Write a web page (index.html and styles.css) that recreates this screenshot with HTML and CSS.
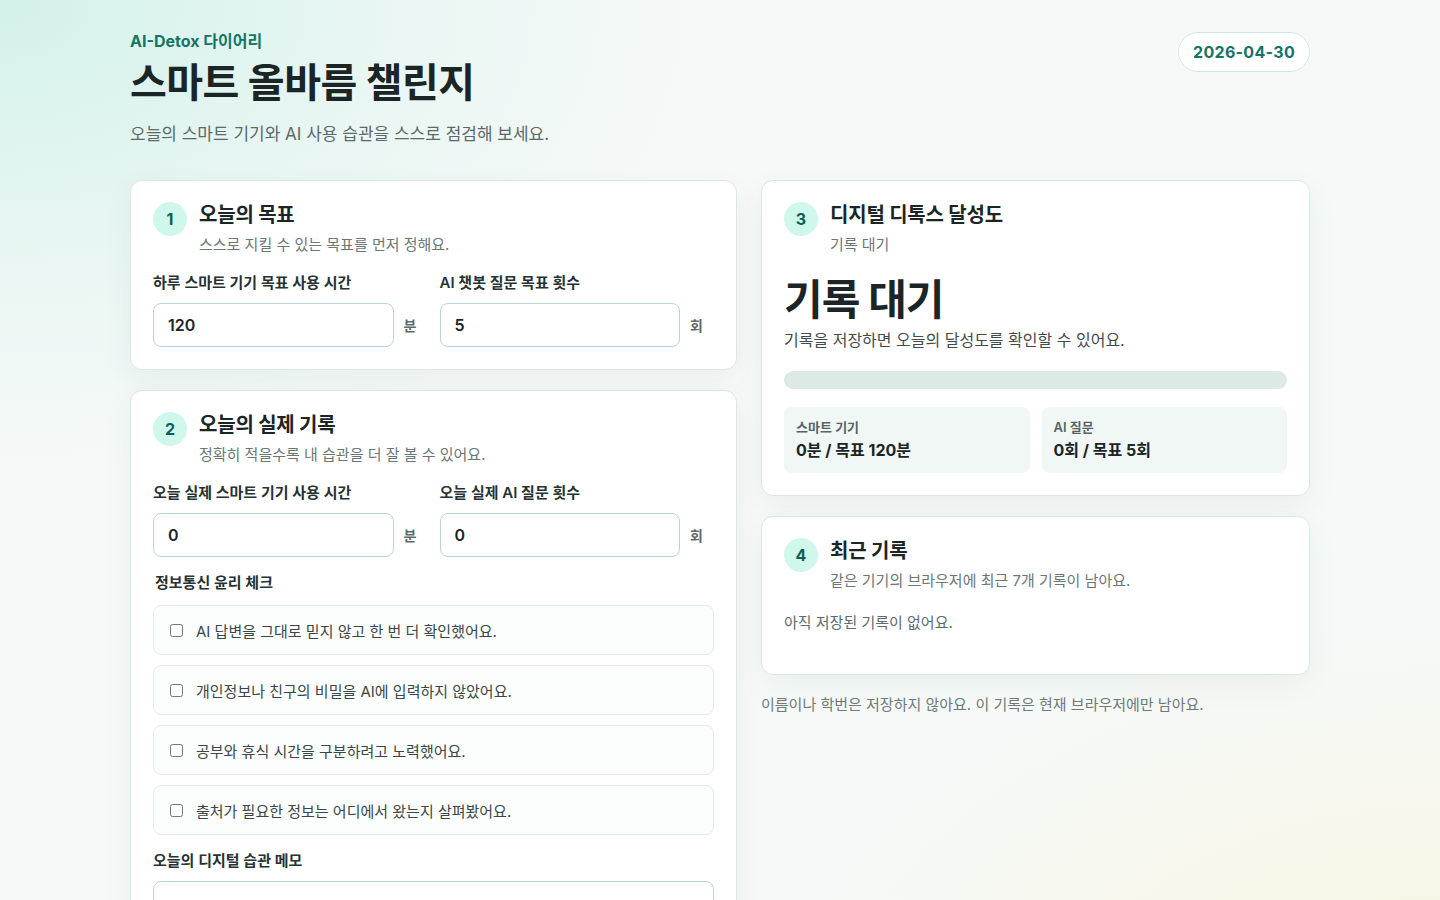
FILE: index.html
```html
<!DOCTYPE html>
<html lang="ko">
<head>
<meta charset="utf-8">
<title>AI-Detox 다이어리</title>
<link rel="stylesheet" href="styles.css">
</head>
<body>
<main class="page">
  <header class="top">
    <div>
      <p class="eyebrow">AI-Detox 다이어리</p>
      <h1 class="title">스마트 올바름 챌린지</h1>
      <p class="lead">오늘의 스마트 기기와 AI 사용 습관을 스스로 점검해 보세요.</p>
    </div>
    <div class="date-pill">2026-04-30</div>
  </header>

  <div class="layout">
    <div class="col">
      <section class="card">
        <div class="card-head">
          <span class="badge">1</span>
          <div>
            <h2 class="card-title">오늘의 목표</h2>
            <p class="card-sub">스스로 지킬 수 있는 목표를 먼저 정해요.</p>
          </div>
        </div>
        <div class="fields">
          <label class="field">
            <span class="field-label">하루 스마트 기기 목표 사용 시간</span>
            <span class="field-row"><input class="input" type="text" size="4" value="120"><span class="unit">분</span></span>
          </label>
          <label class="field">
            <span class="field-label">AI 챗봇 질문 목표 횟수</span>
            <span class="field-row"><input class="input" type="text" size="4" value="5"><span class="unit">회</span></span>
          </label>
        </div>
      </section>

      <section class="card">
        <div class="card-head">
          <span class="badge">2</span>
          <div>
            <h2 class="card-title">오늘의 실제 기록</h2>
            <p class="card-sub">정확히 적을수록 내 습관을 더 잘 볼 수 있어요.</p>
          </div>
        </div>
        <div class="fields">
          <label class="field">
            <span class="field-label">오늘 실제 스마트 기기 사용 시간</span>
            <span class="field-row"><input class="input" type="text" size="4" value="0"><span class="unit">분</span></span>
          </label>
          <label class="field">
            <span class="field-label">오늘 실제 AI 질문 횟수</span>
            <span class="field-row"><input class="input" type="text" size="4" value="0"><span class="unit">회</span></span>
          </label>
        </div>
        <p class="group-label">정보통신 윤리 체크</p>
        <div class="checks">
          <label class="check"><input type="checkbox"><span>AI 답변을 그대로 믿지 않고 한 번 더 확인했어요.</span></label>
          <label class="check"><input type="checkbox"><span>개인정보나 친구의 비밀을 AI에 입력하지 않았어요.</span></label>
          <label class="check"><input type="checkbox"><span>공부와 휴식 시간을 구분하려고 노력했어요.</span></label>
          <label class="check"><input type="checkbox"><span>출처가 필요한 정보는 어디에서 왔는지 살펴봤어요.</span></label>
        </div>
        <p class="memo-label">오늘의 디지털 습관 메모</p>
        <textarea class="memo" rows="3" placeholder="예: 숙제할 때 알림을 끄고, 궁금한 점은 먼저 스스로 생각해 봤어요."></textarea>
      </section>
    </div>

    <div class="col">
      <section class="card">
        <div class="card-head">
          <span class="badge">3</span>
          <div>
            <h2 class="card-title">디지털 디톡스 달성도</h2>
            <p class="card-sub">기록 대기</p>
          </div>
        </div>
        <p class="score">기록 대기</p>
        <p class="score-desc">기록을 저장하면 오늘의 달성도를 확인할 수 있어요.</p>
        <div class="progress"><div class="progress-fill"></div></div>
        <div class="stats">
          <div class="stat">
            <p class="stat-label">스마트 기기</p>
            <p class="stat-value">0분 / 목표 120분</p>
          </div>
          <div class="stat">
            <p class="stat-label">AI 질문</p>
            <p class="stat-value">0회 / 목표 5회</p>
          </div>
        </div>
      </section>

      <section class="card">
        <div class="card-head">
          <span class="badge">4</span>
          <div>
            <h2 class="card-title">최근 기록</h2>
            <p class="card-sub">같은 기기의 브라우저에 최근 7개 기록이 남아요.</p>
          </div>
        </div>
        <p class="empty">아직 저장된 기록이 없어요.</p>
      </section>

      <p class="note">이름이나 학번은 저장하지 않아요. 이 기록은 현재 브라우저에만 남아요.</p>
    </div>
  </div>
</main>
</body>
</html>
```

FILE: styles.css
```css
* { box-sizing: border-box; }

html, body {
  margin: 0;
  padding: 0;
}

body {
  min-height: 100vh;
  font-family: Inter, "Noto Sans CJK KR", sans-serif;
  color: #1d2a2b;
  background:
    radial-gradient(ellipse 900px 600px at 0% 0%, #d3f1ea 0%, rgba(226, 245, 240, 0.6) 45%, rgba(255,255,255,0) 80%),
    radial-gradient(ellipse 800px 500px at 100% 100%, #f6f3dc 0%, rgba(248, 246, 228, 0.5) 50%, rgba(255,255,255,0) 85%),
    #f6f9f8;
}

p, h1, h2 { margin: 0; }

.page {
  width: 1180px;
  margin: 0 auto;
  padding-top: 31px;
  padding-bottom: 40px;
}

.top {
  display: flex;
  justify-content: space-between;
  align-items: flex-start;
}

.eyebrow {
  font-size: 16px;
  line-height: 20px;
  font-weight: 700;
  color: #137565;
}

.title {
  margin-top: 7px;
  font-size: 40px;
  line-height: 50px;
  font-weight: 700;
  letter-spacing: -0.5px;
  color: #1b2526;
}

.lead {
  margin-top: 13px;
  font-size: 17px;
  line-height: 26px;
  color: #5b6a69;
}

.date-pill {
  margin-top: 1px;
  height: 40px;
  padding: 0 14px;
  display: flex;
  align-items: center;
  border: 1px solid #c9ece2;
  border-radius: 20px;
  background: #ffffff;
  font-size: 16px;
  font-weight: 700;
  letter-spacing: 0.3px;
  color: #137565;
}

.layout {
  margin-top: 33px;
  display: grid;
  grid-template-columns: minmax(0, 607fr) minmax(0, 549fr);
  gap: 24px;
  align-items: start;
}

.col {
  min-width: 0;
  display: flex;
  flex-direction: column;
  gap: 20px;
}

.card {
  background: #ffffff;
  border: 1px solid #dbe7e3;
  border-radius: 12px;
  padding: 21px 22px 22px;
  box-shadow: 0 10px 30px rgba(40, 80, 70, 0.06);
}

.card-head {
  display: flex;
  align-items: flex-start;
  gap: 12px;
}

.badge {
  flex: none;
  width: 34px;
  height: 34px;
  border-radius: 50%;
  background: #cff7ec;
  color: #0e5e53;
  font-size: 16px;
  font-weight: 700;
  display: flex;
  align-items: center;
  justify-content: center;
}

.card-title {
  font-size: 20px;
  line-height: 26px;
  font-weight: 700;
  letter-spacing: -0.2px;
  color: #1b2526;
}

.card-sub {
  margin-top: 6px;
  font-size: 15px;
  line-height: 22px;
  color: #6a7776;
}

.fields {
  margin-top: 17px;
  display: grid;
  grid-template-columns: minmax(0, 1fr) minmax(0, 1fr);
  column-gap: 12px;
}

.field {
  display: flex;
  flex-direction: column;
  gap: 10px;
}

.field-label {
  font-size: 15px;
  line-height: 20px;
  font-weight: 600;
  color: #263233;
}

.field-row {
  display: flex;
  align-items: center;
  gap: 10px;
}

.input {
  flex: 1;
  min-width: 0;
  height: 44px;
  padding: 0 14px;
  border: 1px solid #b9d6d0;
  border-radius: 8px;
  background: #ffffff;
  font-family: Inter, "Noto Sans CJK KR", sans-serif;
  font-size: 16px;
  font-weight: 600;
  color: #1b2526;
}

.unit {
  flex: none;
  width: 24px;
  font-size: 14px;
  font-weight: 700;
  color: #5d6b6a;
}

.group-label {
  margin-top: 16px;
  padding-left: 2px;
  font-size: 15px;
  line-height: 20px;
  font-weight: 600;
  color: #263233;
}

.checks {
  margin-top: 12px;
  display: flex;
  flex-direction: column;
  gap: 10px;
}

.check {
  display: flex;
  align-items: center;
  gap: 13px;
  height: 50px;
  padding: 0 16px;
  border: 1px solid #e1ece9;
  border-radius: 8px;
  background: #fbfefd;
  font-size: 15px;
  color: #3a4646;
}

.check input {
  margin: 0;
  width: 13px;
  height: 13px;
}

.memo-label {
  margin-top: 16px;
  font-size: 15px;
  line-height: 20px;
  font-weight: 600;
  color: #263233;
}

.memo {
  display: block;
  width: 100%;
  margin-top: 10px;
  height: 100px;
  padding: 16px 14px;
  border: 1px solid #b9d6d0;
  border-radius: 8px;
  font-family: Inter, "Noto Sans CJK KR", sans-serif;
  font-size: 15px;
  resize: none;
}

.score {
  margin-top: 16px;
  font-size: 42px;
  line-height: 56px;
  font-weight: 700;
  letter-spacing: -1px;
  color: #1b2526;
}

.score-desc {
  margin-top: 0;
  font-size: 16px;
  line-height: 24px;
  color: #3f4b4b;
}

.progress {
  margin-top: 19px;
  height: 18px;
  border-radius: 9px;
  background: #dce9e5;
  overflow: hidden;
}

.progress-fill {
  width: 0;
  height: 100%;
}

.stats {
  margin-top: 18px;
  display: grid;
  grid-template-columns: minmax(0, 1fr) minmax(0, 1fr);
  gap: 12px;
}

.stat {
  height: 66px;
  padding: 12px 12px;
  border-radius: 8px;
  background: #f0f7f5;
}

.stat-label {
  font-size: 13px;
  line-height: 17px;
  font-weight: 600;
  color: #566463;
}

.stat-value {
  margin-top: 3px;
  font-size: 16px;
  line-height: 22px;
  font-weight: 700;
  color: #1b2526;
}

.empty {
  margin-top: 20px;
  padding-bottom: 18px;
  font-size: 15px;
  line-height: 22px;
  color: #5d6b6a;
}

.note {
  margin-top: -1px;
  font-size: 15px;
  line-height: 22px;
  color: #6d7a79;
}
```
